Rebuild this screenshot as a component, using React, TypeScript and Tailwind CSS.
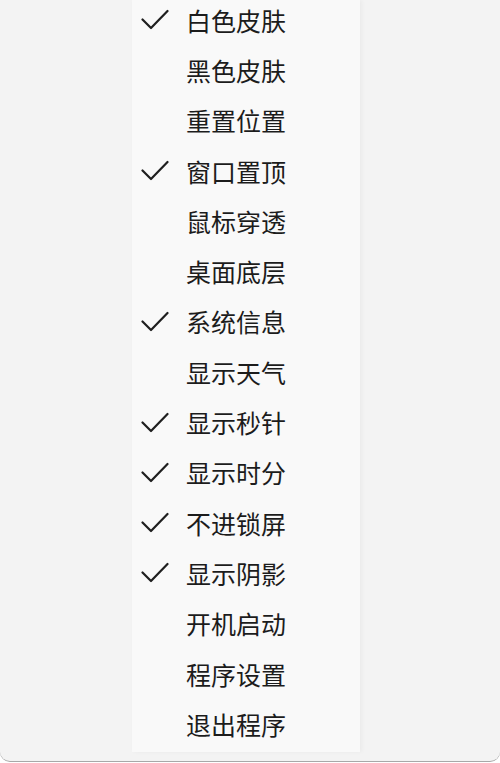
import React from 'react';

const items: { label: string; checked: boolean }[] = [
  { label: '白色皮肤', checked: true },
  { label: '黑色皮肤', checked: false },
  { label: '重置位置', checked: false },
  { label: '窗口置顶', checked: true },
  { label: '鼠标穿透', checked: false },
  { label: '桌面底层', checked: false },
  { label: '系统信息', checked: true },
  { label: '显示天气', checked: false },
  { label: '显示秒针', checked: true },
  { label: '显示时分', checked: true },
  { label: '不进锁屏', checked: true },
  { label: '显示阴影', checked: true },
  { label: '开机启动', checked: false },
  { label: '程序设置', checked: false },
  { label: '退出程序', checked: false },
];

function Check() {
  return (
    <svg width="28" height="22" viewBox="0 0 28 22" fill="none">
      <path d="M1.5 10.5 L10 19 L26.5 2" stroke="#1f1f1f" strokeWidth="2.2" strokeLinecap="round" strokeLinejoin="round" />
    </svg>
  );
}

export default function App() {
  return (
    <div className="w-[500px] h-[763px] bg-white overflow-hidden">
      <div className="h-[762px] bg-[#f3f3f3] rounded-b-[10px] border-b border-[#a8a8a8] overflow-hidden">
        <div className="ml-[132px] w-[228px] h-[752px] bg-[#f9f9f9] shadow-[2px_0_4px_rgba(0,0,0,0.04)] overflow-hidden">
          <ul className="-mt-[5px] flex flex-col">
            {items.map((item) => (
              <li
                key={item.label}
                className="flex items-center h-[50.3px] text-[25px] leading-none text-[#1c1c1c]"
                style={{ fontFamily: '"Noto Sans CJK SC", "Noto Sans", sans-serif' }}
              >
                <span className="w-[54px] pl-[9px] flex items-center">
                  {item.checked && <Check />}
                </span>
                <span>{item.label}</span>
              </li>
            ))}
          </ul>
        </div>
      </div>
    </div>
  );
}
